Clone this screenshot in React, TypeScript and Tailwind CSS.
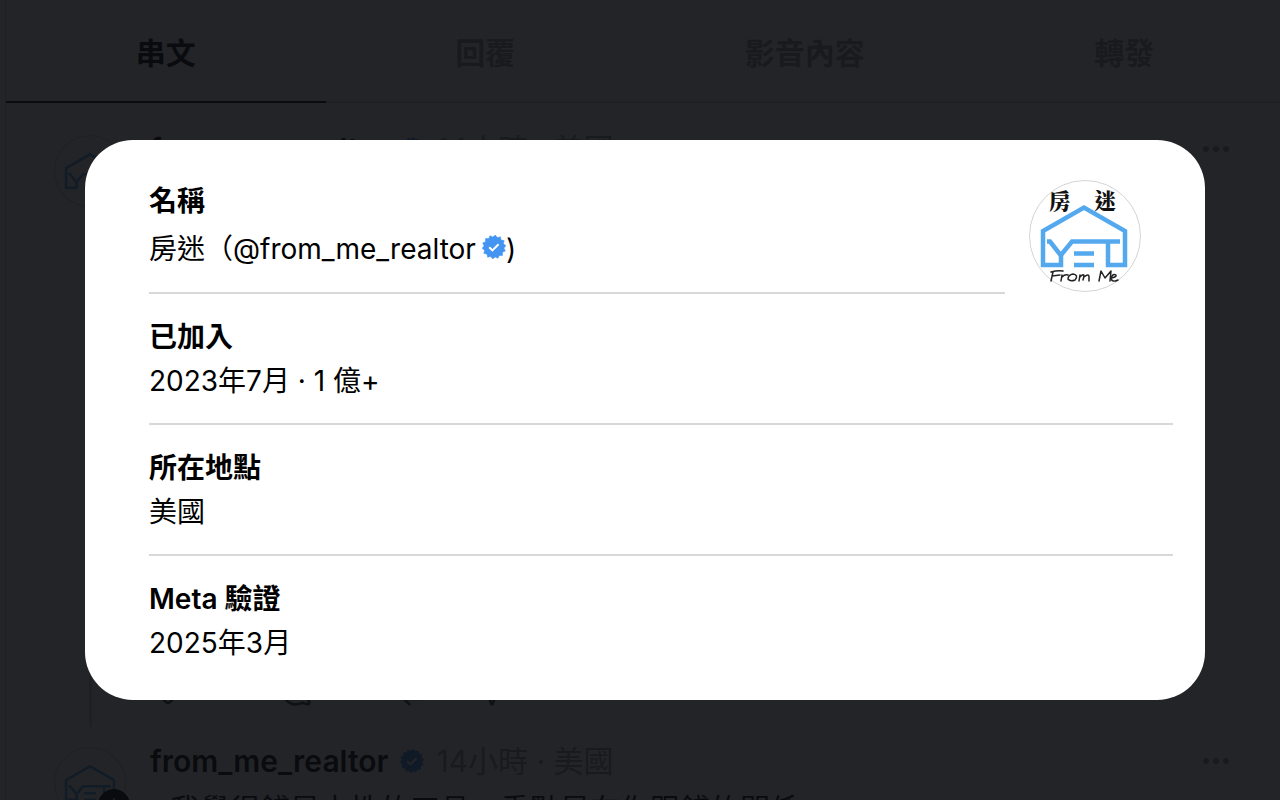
import { Heart, MessageCircle, Plus, Repeat, Send } from 'lucide-react';
import type { ReactNode } from 'react';

const tabs = ['串文', '回覆', '影音內容', '轉發'];

interface PostProps {
    text?: string;
    thread?: boolean;
}

function VerifiedBadge({ className }: { className?: string }) {
    const points = Array.from({ length: 28 }, (_, i) => {
        const r = i % 2 === 0 ? 12 : 10;
        const a = (i * Math.PI) / 14 - Math.PI / 28;
        return `${12 + r * Math.cos(a)},${12 + r * Math.sin(a)}`;
    }).join(' ');

    return (
        <svg viewBox="0 0 24 24" className={className} role="img" aria-label="已驗證">
            <polygon points={points} fill="#4494f2" stroke="#4494f2" strokeWidth="0.5" strokeLinejoin="round" />
            <path d="M7.2 12.2l3.200 3.200 6.200-6.200" fill="none" stroke="#fff" strokeWidth="2" />
        </svg>
    );
}

function House() {
    return (
        <g fill="none" stroke="#54a9ee" strokeWidth="4.5">
            <path d="M18 61.500H21L31.500 75H32L43 61.500H91" />
            <path d="M32 74V85H14V51L55 27.500L96 51V85H79V62" />
            <path d="M45 73.500H65M45 85H65" />
        </g>
    );
}

function ProfileLogo({ className }: { className?: string }) {
    return (
        <svg viewBox="0 0 112 112" className={className} role="img" aria-label="房迷 From Me">
            <circle cx="56" cy="56" r="55.5" fill="#fff" stroke="#d4d4d4" />
            <g fontFamily='"Noto Serif CJK TC", "Noto Sans CJK TC", serif' fontSize="22" fontWeight="900" fill="#111">
                <text x="20" y="29">房</text>
                <text x="65" y="29">迷</text>
            </g>
            <House />
            <g fill="none" stroke="#222" strokeWidth="1.5" strokeLinecap="round" strokeLinejoin="round">
                <path d="M22 92Q29 90 34 91M24 92L22 101M23 96L31 95" />
                <path d="M33 95L32 101M33 97Q36 94 39 95" />
                <path d="M44 94Q39 95 39 99Q41 102 46 100Q50 95 44 94" />
                <path d="M51 95L50 101M51 97Q55 93 55 96L54 100M55 97Q60 93 60 97L60 101" />
                <path d="M70 101L72 91L76 98L82 91L81 101" />
                <path d="M82 98Q88 97 87 95Q84 93 82 98Q83 103 89 100" />
            </g>
        </svg>
    );
}

function Avatar() {
    return (
        <svg viewBox="0 0 112 112" className="size-[72px]" role="img" aria-label="from_me_realtor">
            <circle cx="56" cy="56" r="55" fill="#fff" stroke="#d4d4d4" strokeWidth="2" />
            <g transform="translate(6 5) scale(0.91)">
                <House />
            </g>
        </svg>
    );
}

function Post({ text, thread }: PostProps) {
    return (
        <article className="flex h-[612px] gap-6 pr-[55px] pl-12">
            <div className="flex w-[72px] shrink-0 flex-col items-center pt-1">
                <div className="relative">
                    <Avatar />
                    <button
                        type="button"
                        aria-label="追蹤"
                        className="absolute top-[42px] left-11 flex size-8 items-center justify-center rounded-full bg-black text-white"
                    >
                        <Plus className="size-5" />
                    </button>
                </div>
                {thread && <div className="mt-4 mb-4 w-[3px] flex-1 bg-[#d5d5d5]" />}
            </div>
            <div className="flex min-w-0 flex-1 flex-col">
                <header className="flex h-9 items-center text-[30px]">
                    <a href="#profile" className="font-semibold">
                        from_me_realtor
                    </a>
                    <VerifiedBadge className="ml-3 size-6" />
                    <span className="ml-3 whitespace-pre text-[#999]">14小時 · 美國</span>
                    <button type="button" aria-label="更多" className="ml-auto flex gap-1 text-[#999]">
                        <span className="size-1.5 rounded-full bg-current" />
                        <span className="size-1.5 rounded-full bg-current" />
                        <span className="size-1.5 rounded-full bg-current" />
                    </button>
                </header>
                <p className="mt-2 pl-5 text-[30px] leading-[44px]">{text}</p>
                <div className="mt-auto mb-9 flex pl-0.5 text-[#444]">
                    <button type="button" aria-label="讚" className="mr-24">
                        <Heart className="size-8" />
                    </button>
                    <button type="button" aria-label="回覆" className="mr-[88px]">
                        <MessageCircle className="size-8 -scale-x-100" />
                    </button>
                    <button type="button" aria-label="轉發" className="mr-10">
                        <Repeat className="size-8" />
                    </button>
                    <button type="button" aria-label="分享">
                        <Send className="size-8" />
                    </button>
                </div>
            </div>
        </article>
    );
}

function InfoRow({ label, children }: { label: string; children: ReactNode }) {
    return (
        <div className="border-b-2 border-[#d8d8d8] pt-[21px] pb-5 last:border-b-0 last:pb-[35px]">
            <dt className="font-semibold">{label}</dt>
            <dd>{children}</dd>
        </div>
    );
}

export default function App() {
    return (
        <div className="relative h-screen overflow-hidden bg-white font-['Inter','Noto_Sans_CJK_TC',sans-serif] text-black">
            <main className="-mr-1 ml-[5px] border-l border-[#d5d5d5]">
                <nav className="mb-7 flex h-[103px] border-b-2 border-[#d5d5d5]">
                    {tabs.map((tab, i) => (
                        <button
                            key={tab}
                            type="button"
                            className={`-mb-0.5 flex-1 border-b-2 pt-1.5 text-[30px] font-semibold ${
                                i === 0 ? 'border-black' : 'border-transparent text-[#999]'
                            }`}
                        >
                            {tab}
                        </button>
                    ))}
                </nav>
                <Post thread />
                <Post text="我覺得錢是中性的工具，重點是在你跟錢的關係" />
            </main>

            <div className="absolute inset-0 flex items-center justify-center bg-[#0b0c10]/90 pt-10 pl-2.5">
                <section
                    role="dialog"
                    aria-modal="true"
                    aria-label="關於此個人檔案"
                    className="w-full max-w-[1120px] rounded-[48px] bg-white pr-8 pl-16 text-[28px] leading-[44px]"
                >
                    <div className="flex items-end gap-6 pr-8">
                        <dl className="flex-1 border-b-2 border-[#d8d8d8] pt-[39px] pb-[21px]">
                            <dt className="font-semibold">名稱</dt>
                            <dd className="mt-1 flex items-center">
                                房迷（@from_me_realtor
                                <VerifiedBadge className="mb-1 ml-1.5 size-6" />)
                            </dd>
                        </dl>
                        <ProfileLogo className="mb-0.5 size-28" />
                    </div>
                    <dl>
                        <InfoRow label="已加入">2023年7月 · 1 億+</InfoRow>
                        <InfoRow label="所在地點">美國</InfoRow>
                        <InfoRow label="Meta 驗證">2025年3月</InfoRow>
                    </dl>
                </section>
            </div>
        </div>
    );
}
